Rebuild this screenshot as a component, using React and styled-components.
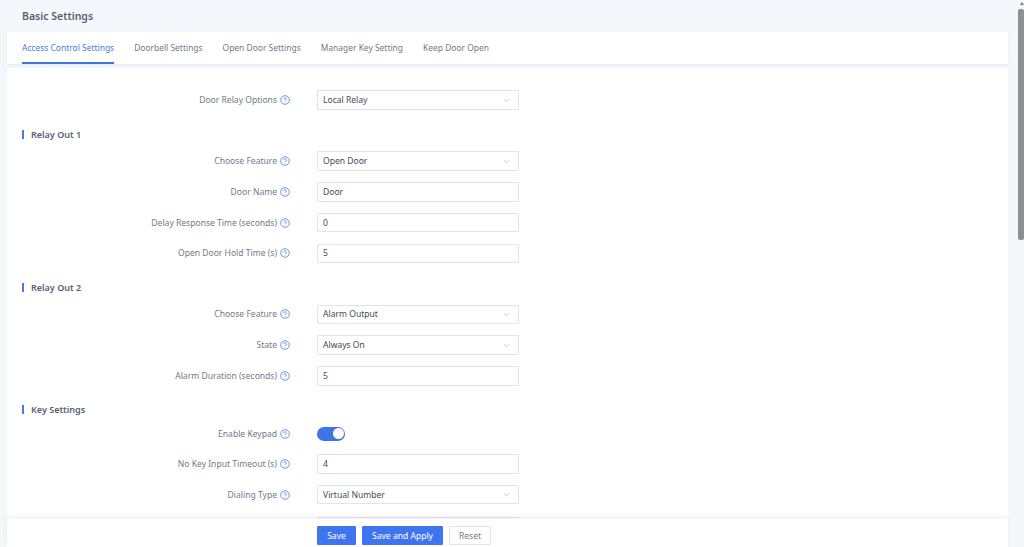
import React from "react";
import styled, { createGlobalStyle } from "styled-components";

const Global = createGlobalStyle`
  html, body { margin: 0; height: 100%; overflow: hidden; }
  body { background: #f4f7fb; font-family: "Noto Sans", "Open Sans", sans-serif; }
  * { box-sizing: border-box; }
`;

const Page = styled.div`
  position: relative;
  width: 1024px;
  height: 547px;
  overflow: hidden;
  padding: 0 16px 0 7px;
  background: #f4f7fb;
`;
const Title = styled.h1`
  margin: 0;
  height: 32px;
  padding-left: 15px;
  font-size: 10.5px;
  line-height: 32px;
  font-weight: 600;
  color: #566074;
`;
const Tabs = styled.nav`
  display: flex;
  gap: 20px;
  height: 32px;
  padding-left: 15px;
  background: #fff;
  box-shadow: 0 1px 3px rgba(40, 60, 100, 0.06);
`;
const Tab = styled.div`
  height: 32px;
  line-height: 32px;
  font-size: 8.45px;
  color: ${(p) => (p.$active ? "#4a7be0" : "#727a8a")};
  border-bottom: ${(p) => (p.$active ? "2px solid #3f74e0" : "none")};
`;
const Content = styled.main`
  margin-top: 4px;
  height: 480px;
  padding: 22.25px 0 0 15px;
  background: #fff;
`;
const Row = styled.div`
  display: flex;
  align-items: center;
  height: 19.5px;
  margin-bottom: 11.25px;
`;
const Label = styled.div`
  display: flex;
  align-items: center;
  justify-content: flex-end;
  gap: 3px;
  width: 268px;
  margin-right: 27px;
  font-size: 8.55px;
  color: #727a8a;
  white-space: nowrap;
`;
const Help = styled.svg`
  width: 10px;
  height: 10px;
  flex: none;
  fill: none;
  stroke: #4a7be0;
`;
const Field = styled.div`
  display: flex;
  align-items: center;
  justify-content: space-between;
  width: 202px;
  height: 19.5px;
  padding: 0 8px 0 5px;
  background: #fff;
  border: 1px solid #e1e4ea;
  border-radius: 1px;
  font-size: 8.55px;
  color: #444a58;
`;
const TailField = styled(Field)`
  margin: 12.75px 0 0 295px;
`;
const Chevron = styled.svg`
  width: 7px;
  height: 5px;
  fill: none;
  stroke: #b9bec8;
  stroke-width: 0.8;
`;
const Section = styled.h2`
  height: 9px;
  margin: 19.75px 0 12.75px;
  padding-left: 7px;
  border-left: 2px solid #4a7be0;
  line-height: 9px;
  font-size: 9px;
  font-weight: 600;
  color: #566074;
`;
const ToggleRow = styled(Row)`
  margin-top: -3px;
  margin-bottom: 10.5px;
`;
const Toggle = styled.div`
  display: flex;
  justify-content: flex-end;
  align-items: center;
  width: 28px;
  height: 14px;
  padding: 1.5px;
  border-radius: 7px;
  background: #3f74e8;
`;
const Knob = styled.div`
  width: 11px;
  height: 11px;
  border-radius: 50%;
  background: #fff;
`;
const Footer = styled.footer`
  position: absolute;
  left: 7px;
  bottom: 0;
  display: flex;
  gap: 6px;
  width: 1001px;
  height: 28px;
  padding: 7px 0 0 310px;
  background: #fff;
  box-shadow: 0 -2px 6px rgba(40, 60, 100, 0.07);
`;
const Button = styled.button`
  width: ${(p) => p.$w}px;
  height: 19px;
  padding: 0;
  font: 8.55px "Noto Sans", sans-serif;
  border-radius: 1px;
  color: ${(p) => (p.$primary ? "#fff" : "#727a8a")};
  background: ${(p) => (p.$primary ? "#3f74f0" : "#fff")};
  border: 1px solid ${(p) => (p.$primary ? "#3f74f0" : "#e1e4ea")};
`;
const ScrollThumb = styled.div`
  position: absolute;
  right: 0;
  top: 9px;
  width: 6px;
  height: 231px;
  border-radius: 2px;
  background: #8f8f8f;
`;
const ScrollArrow = styled.div`
  position: absolute;
  right: 0.5px;
  top: 2px;
  border-left: 2.5px solid transparent;
  border-right: 2.5px solid transparent;
  border-bottom: 3px solid #777;
`;

const HelpIcon = () => (
  <Help viewBox="0 0 10 10">
    <circle cx="5" cy="5" r="4.3" strokeWidth="0.8" />
    <path d="M3.7 4a1.3 1.3 0 1 1 2 1.1c-.5.3-.7.5-.7 1" strokeWidth="0.8" />
    <path d="M5 7.2v.6" strokeWidth="0.8" />
  </Help>
);

const FormRow = ({ label, value, select }) => (
  <Row>
    <Label>
      {label}
      <HelpIcon />
    </Label>
    <Field>
      {value}
      {select && (
        <Chevron viewBox="0 0 7 5">
          <path d="M1 1.2l2.5 2.6L6 1.2" />
        </Chevron>
      )}
    </Field>
  </Row>
);

export default function App() {
  return (
    <Page>
      <Global />
      <Title>Basic Settings</Title>
      <Tabs>
        <Tab $active>Access Control Settings</Tab>
        <Tab>Doorbell Settings</Tab>
        <Tab>Open Door Settings</Tab>
        <Tab>Manager Key Setting</Tab>
        <Tab>Keep Door Open</Tab>
      </Tabs>
      <Content>
        <FormRow label="Door Relay Options" value="Local Relay" select />
        <Section>Relay Out 1</Section>
        <FormRow label="Choose Feature" value="Open Door" select />
        <FormRow label="Door Name" value="Door" />
        <FormRow label="Delay Response Time (seconds)" value="0" />
        <FormRow label="Open Door Hold Time (s)" value="5" />
        <Section>Relay Out 2</Section>
        <FormRow label="Choose Feature" value="Alarm Output" select />
        <FormRow label="State" value="Always On" select />
        <FormRow label="Alarm Duration (seconds)" value="5" />
        <Section>Key Settings</Section>
        <ToggleRow>
          <Label>
            Enable Keypad
            <HelpIcon />
          </Label>
          <Toggle>
            <Knob />
          </Toggle>
        </ToggleRow>
        <FormRow label="No Key Input Timeout (s)" value="4" />
        <FormRow label="Dialing Type" value="Virtual Number" select />
        <TailField />
      </Content>
      <Footer>
        <Button $primary $w={39}>Save</Button>
        <Button $primary $w={81}>Save and Apply</Button>
        <Button $w={42}>Reset</Button>
      </Footer>
      <ScrollArrow />
      <ScrollThumb />
    </Page>
  );
}
